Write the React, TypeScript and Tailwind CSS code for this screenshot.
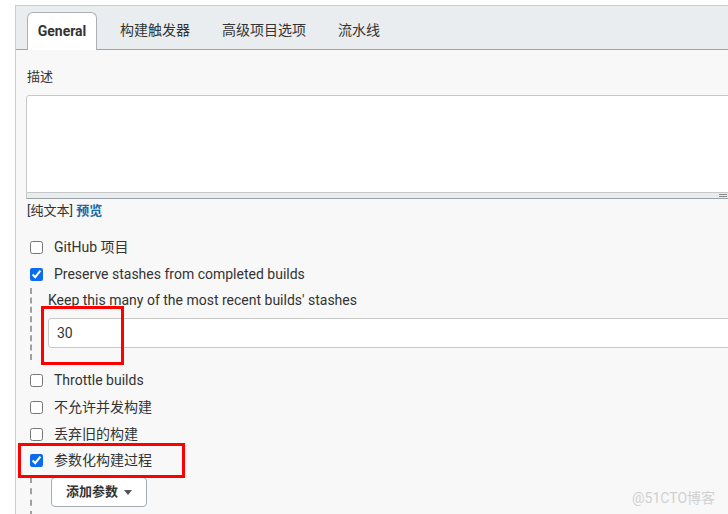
const font = "font-['Roboto','Noto_Sans_CJK_SC',sans-serif]";

function Check({ checked, label }: { checked?: boolean; label: string }) {
  return (
    <label className="flex h-[26.7px] items-center text-[14px] text-[#333]">
      <input
        type="checkbox"
        readOnly
        checked={!!checked}
        className="m-0 ml-[3px] h-[13px] w-[13px] accent-[#0b6cf0]"
      />
      <span className="ml-[11px]">{label}</span>
    </label>
  );
}

export default function App() {
  const tabs = ["构建触发器", "高级项目选项", "流水线"];
  return (
    <div className={`relative h-[514px] w-[728px] overflow-hidden bg-white pt-[5px] pl-[15px] ${font}`}>
      <div className="h-[520px] w-[740px] border-l border-t border-[#c9ccd0] bg-[#f8f8f8]">
        {/* tab bar */}
        <div className="flex h-[44px] items-end border-b border-[#9ca4ab] bg-[#e9edf0] pl-[11px]">
          <div className="-mb-px flex h-[38px] w-[70px] items-center justify-center rounded-t-[6px] border border-b-0 border-[#a9b0b6] bg-white text-[14px] font-bold text-[#333]">
            General
          </div>
          <div className="ml-[7px] flex h-[37px]">
            {tabs.map((t) => (
              <div key={t} className="flex items-center px-[16px] text-[14px] text-[#333]">
                {t}
              </div>
            ))}
          </div>
        </div>

        {/* content */}
        <div className="px-[11px]">
          <div className="pt-[17px] text-[13px] leading-[20px] text-[#333]">描述</div>
          <div className="relative -ml-px mt-[8px] w-[708px]">
            <div className="h-[98px] rounded-t-[3px] border border-[#c8c8c8] bg-white" />
            <div className="relative h-[6px] border-x border-b border-[#9ca4ab] border-x-[#c8c8c8] bg-[#e9edf0]">
              <div className="absolute right-[6px] top-[1px] h-[1px] w-[8px] bg-[#888]" />
              <div className="absolute right-[6px] top-[3px] h-[1px] w-[8px] bg-[#888]" />
            </div>
          </div>
          <div className="mt-[2px] text-[13px] leading-[20px] text-[#333]">
            [纯文本] <span className="font-bold text-[#1a6aa6]">预览</span>
          </div>

          <div className="mt-[13px]">
            <Check label="GitHub 项目" />
            <Check checked label="Preserve stashes from completed builds" />
          </div>

          <div className="ml-[3px] mt-[1px] border-l-2 border-dashed border-[#a0a0a0] pb-[12px] pl-[16px] pt-[2px]">
            <div className="text-[14px] leading-[20px] text-[#333]">Keep this many of the most recent builds' stashes</div>
            <input
              readOnly
              value="30"
              className="mt-[8px] h-[30px] w-[700px] rounded-[3px] border border-[#c8c8c8] bg-white px-[8px] text-[14px] text-[#333] outline-none"
            />
          </div>

          <div className="mt-[7px]">
            <Check label="Throttle builds" />
            <Check label="不允许并发构建" />
            <Check label="丢弃旧的构建" />
            <Check checked label="参数化构建过程" />
          </div>

          <div className="ml-[3px] mt-[3px] h-[40px] border-l-2 border-dashed border-[#a0a0a0] pl-[19px]">
            <button className="flex h-[30px] w-[96px] items-center justify-center gap-[6px] rounded-[4px] border border-[#a5acb2] bg-white text-[13px] font-bold text-[#333]">
              添加参数
              <svg width="8" height="5" viewBox="0 0 8 5">
                <path d="M0 0h8L4 5z" fill="#555" />
              </svg>
            </button>
          </div>
        </div>
      </div>

      {/* annotations */}
      <div className="absolute left-[41px] top-[306px] h-[59px] w-[83px] border-[3px] border-[#ff0000]" />
      <div className="absolute left-[18px] top-[443px] h-[35px] w-[167px] border-[3px] border-[#ff0000]" />

      <div className="absolute left-[632px] top-[488px] text-[14px] text-[#d0d0d0]">@51CTO博客</div>
    </div>
  );
}
